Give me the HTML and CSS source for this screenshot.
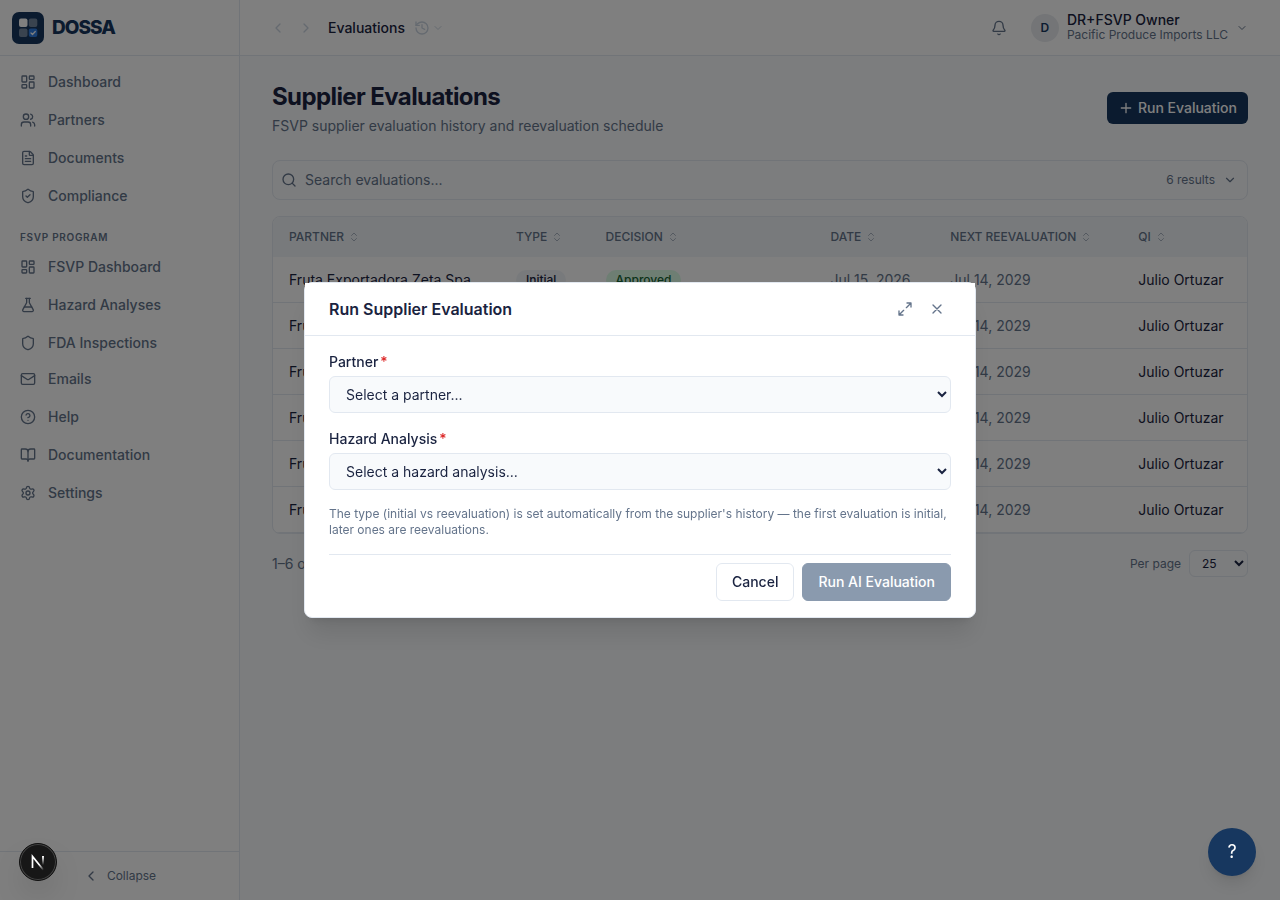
FILE: index.html
```html
<!DOCTYPE html>
<html lang="en">

<head>
    <meta charset="UTF-8">
    <meta name="viewport" content="width=device-width, initial-scale=1.0">
    <title>Supplier Evaluations - DOSSA</title>
    <link rel="stylesheet" href="styles.css">
</head>

<body>

    <!-- shared icons -->
    <svg class="sprite" aria-hidden="true">
        <symbol id="i-dashboard" viewBox="0 0 24 24"><rect x="3" y="3" width="7" height="9" rx="1"/><rect x="14" y="3" width="7" height="5" rx="1"/><rect x="14" y="12" width="7" height="9" rx="1"/><rect x="3" y="16" width="7" height="5" rx="1"/></symbol>
        <symbol id="i-sort" viewBox="0 0 24 24"><path d="m7 15 5 5 5-5"/><path d="m7 9 5-5 5 5"/></symbol>
        <symbol id="i-down" viewBox="0 0 24 24"><path d="m6 9 6 6 6-6"/></symbol>
        <symbol id="i-left" viewBox="0 0 24 24"><path d="m15 18-6-6 6-6"/></symbol>
        <symbol id="i-right" viewBox="0 0 24 24"><path d="m9 18 6-6-6-6"/></symbol>
    </svg>

    <div class="app">
        <aside class="sidebar">
            <a class="brand" href="#">
                <svg class="logo" viewBox="0 0 32 32" aria-hidden="true">
                    <rect width="32" height="32" rx="7" fill="#17375f"/>
                    <rect x="7" y="6.500" width="8.500" height="8.500" rx="2" fill="#fff"/>
                    <rect x="16.800" y="6.500" width="8.500" height="8.500" rx="2" fill="#fff" opacity=".4"/>
                    <rect x="7" y="16.500" width="8.500" height="8.500" rx="2" fill="#fff" opacity=".4"/>
                    <rect x="16.800" y="16.500" width="8.500" height="8.500" rx="2" fill="#2f7de1"/>
                    <path d="m19 21 1.500 1.500 2.800-3" fill="none" stroke="#fff" stroke-width="1.200" stroke-linecap="round" stroke-linejoin="round"/>
                </svg>
                <span>DOSSA</span>
            </a>
            <nav class="nav">
                <a href="#"><svg class="icon"><use href="#i-dashboard"/></svg>Dashboard</a>
                <a href="#"><svg class="icon" viewBox="0 0 24 24"><path d="M16 21v-2a4 4 0 0 0-4-4H6a4 4 0 0 0-4 4v2"/><circle cx="9" cy="7" r="4"/><path d="M22 21v-2a4 4 0 0 0-3-3.870"/><path d="M16 3.130a4 4 0 0 1 0 7.750"/></svg>Partners</a>
                <a href="#"><svg class="icon" viewBox="0 0 24 24"><path d="M6 22a2 2 0 0 1-2-2V4a2 2 0 0 1 2-2h8a2.400 2.400 0 0 1 1.704.706l3.588 3.588A2.400 2.400 0 0 1 20 8v12a2 2 0 0 1-2 2z"/><path d="M14 2v5a1 1 0 0 0 1 1h5M10 9H8M16 13H8M16 17H8"/></svg>Documents</a>
                <a href="#"><svg class="icon" viewBox="0 0 24 24"><path d="M20 13c0 5-3.500 7.500-7.660 8.950a1 1 0 0 1-.670-.010C7.500 20.500 4 18 4 13V6a1 1 0 0 1 1-1c2 0 4.500-1.200 6.240-2.720a1.170 1.170 0 0 1 1.520 0C14.510 3.810 17 5 19 5a1 1 0 0 1 1 1z"/><path d="m9 12 2 2 4-4"/></svg>Compliance</a>
            </nav>
            <h2 class="nav-heading">FSVP Program</h2>
            <nav class="nav">
                <a href="#"><svg class="icon"><use href="#i-dashboard"/></svg>FSVP Dashboard</a>
                <a href="#"><svg class="icon" viewBox="0 0 24 24"><path d="M14 2v6a2 2 0 0 0 .245.960l5.510 10.080A2 2 0 0 1 18 22H6a2 2 0 0 1-1.755-2.960l5.510-10.080A2 2 0 0 0 10 8V2"/><path d="M6.453 15h11.094M8.500 2h7"/></svg>Hazard Analyses</a>
                <a href="#"><svg class="icon" viewBox="0 0 24 24"><path d="M20 13c0 5-3.500 7.500-7.660 8.950a1 1 0 0 1-.670-.010C7.500 20.500 4 18 4 13V6a1 1 0 0 1 1-1c2 0 4.500-1.200 6.240-2.720a1.170 1.170 0 0 1 1.520 0C14.510 3.810 17 5 19 5a1 1 0 0 1 1 1z"/></svg>FDA Inspections</a>
            </nav>
            <nav class="nav">
                <a href="#"><svg class="icon" viewBox="0 0 24 24"><rect x="2" y="4" width="20" height="16" rx="2"/><path d="m22 7-8.991 5.727a2 2 0 0 1-2.009 0L2 7"/></svg>Emails</a>
                <a href="#"><svg class="icon" viewBox="0 0 24 24"><circle cx="12" cy="12" r="10"/><path d="M9.090 9a3 3 0 0 1 5.830 1c0 2-3 3-3 3M12 17h.010"/></svg>Help</a>
                <a href="#"><svg class="icon" viewBox="0 0 24 24"><path d="M12 7v14"/><path d="M3 18a1 1 0 0 1-1-1V4a1 1 0 0 1 1-1h5a4 4 0 0 1 4 4 4 4 0 0 1 4-4h5a1 1 0 0 1 1 1v13a1 1 0 0 1-1 1h-6a3 3 0 0 0-3 3 3 3 0 0 0-3-3z"/></svg>Documentation</a>
                <a href="#"><svg class="icon" viewBox="0 0 24 24"><path d="M9.671 4.136a2.340 2.340 0 0 1 4.659 0 2.340 2.340 0 0 0 3.319 1.915 2.340 2.340 0 0 1 2.330 4.033 2.340 2.340 0 0 0 0 3.831 2.340 2.340 0 0 1-2.330 4.033 2.340 2.340 0 0 0-3.319 1.915 2.340 2.340 0 0 1-4.659 0 2.340 2.340 0 0 0-3.320-1.915 2.340 2.340 0 0 1-2.330-4.033 2.340 2.340 0 0 0 0-3.831A2.340 2.340 0 0 1 6.350 6.051a2.340 2.340 0 0 0 3.319-1.915"/><circle cx="12" cy="12" r="3"/></svg>Settings</a>
            </nav>
            <div class="sidebar-footer">
                <button type="button"><svg class="icon"><use href="#i-left"/></svg>Collapse</button>
            </div>
        </aside>

        <div class="page">
            <header class="topbar">
                <div class="history">
                    <button type="button" aria-label="Back"><svg class="icon"><use href="#i-left"/></svg></button>
                    <button type="button" aria-label="Forward"><svg class="icon"><use href="#i-right"/></svg></button>
                </div>
                <span class="crumb">Evaluations</span>
                <button class="recent" type="button" aria-label="Recent pages">
                    <svg class="icon" viewBox="0 0 24 24"><path d="M3 12a9 9 0 1 0 9-9 9.750 9.750 0 0 0-6.740 2.740L3 8"/><path d="M3 3v5h5M12 7v5l4 2"/></svg>
                    <svg class="icon tiny"><use href="#i-down"/></svg>
                </button>
                <button class="bell" type="button" aria-label="Notifications">
                    <svg class="icon" viewBox="0 0 24 24"><path d="M10.268 21a2 2 0 0 0 3.464 0"/><path d="M3.262 15.326A1 1 0 0 0 4 17h16a1 1 0 0 0 .740-1.673C19.410 13.956 18 12.499 18 8A6 6 0 0 0 6 8c0 4.499-1.411 5.956-2.738 7.326"/></svg>
                </button>
                <button class="user" type="button">
                    <span class="avatar">D</span>
                    <span class="user-text">
                        <span class="user-name">DR+FSVP Owner</span>
                        <span class="user-org">Pacific Produce Imports LLC</span>
                    </span>
                    <svg class="icon tiny"><use href="#i-down"/></svg>
                </button>
            </header>

            <main class="content">
                <div class="page-head">
                    <div>
                        <h1>Supplier Evaluations</h1>
                        <p>FSVP supplier evaluation history and reevaluation schedule</p>
                    </div>
                    <button class="btn-run" type="button">
                        <svg class="icon" viewBox="0 0 24 24"><path d="M5 12h14M12 5v14"/></svg>
                        Run Evaluation
                    </button>
                </div>

                <div class="search">
                    <svg class="icon" viewBox="0 0 24 24"><circle cx="11" cy="11" r="8"/><path d="m21 21-4.300-4.300"/></svg>
                    <input type="text" placeholder="Search evaluations..." aria-label="Search evaluations">
                    <span class="results">6 results</span>
                    <button type="button" aria-label="Show filters"><svg class="icon small"><use href="#i-down"/></svg></button>
                </div>

                <div class="table-wrap">
                    <table>
                        <colgroup>
                            <col class="col-partner">
                            <col class="col-type">
                            <col class="col-decision">
                            <col class="col-date">
                            <col class="col-next">
                            <col>
                        </colgroup>
                        <thead>
                            <tr>
                                <th><span>Partner<svg class="icon tiny"><use href="#i-sort"/></svg></span></th>
                                <th><span>Type<svg class="icon tiny"><use href="#i-sort"/></svg></span></th>
                                <th><span>Decision<svg class="icon tiny"><use href="#i-sort"/></svg></span></th>
                                <th><span>Date<svg class="icon tiny"><use href="#i-sort"/></svg></span></th>
                                <th><span>Next Reevaluation<svg class="icon tiny"><use href="#i-sort"/></svg></span></th>
                                <th><span>QI<svg class="icon tiny"><use href="#i-sort"/></svg></span></th>
                            </tr>
                        </thead>
                        <tbody>
                            <tr>
                                <td>Fruta Exportadora Zeta Spa</td>
                                <td><span class="badge">Initial</span></td>
                                <td><span class="badge approved">Approved</span></td>
                                <td class="date">Jul 15, 2026</td>
                                <td class="date">Jul 14, 2029</td>
                                <td>Julio Ortuzar</td>
                            </tr>
                            <tr>
                                <td>Fruta Exportadora Zeta Spa</td>
                                <td><span class="badge">Initial</span></td>
                                <td><span class="badge approved">Approved</span></td>
                                <td class="date">Jul 15, 2026</td>
                                <td class="date">Jul 14, 2029</td>
                                <td>Julio Ortuzar</td>
                            </tr>
                            <tr>
                                <td>Fruta Exportadora Zeta Spa</td>
                                <td><span class="badge">Initial</span></td>
                                <td><span class="badge approved">Approved</span></td>
                                <td class="date">Jul 15, 2026</td>
                                <td class="date">Jul 14, 2029</td>
                                <td>Julio Ortuzar</td>
                            </tr>
                            <tr>
                                <td>Fruta Exportadora Zeta Spa</td>
                                <td><span class="badge">Initial</span></td>
                                <td><span class="badge approved">Approved</span></td>
                                <td class="date">Jul 15, 2026</td>
                                <td class="date">Jul 14, 2029</td>
                                <td>Julio Ortuzar</td>
                            </tr>
                            <tr>
                                <td>Fruta Exportadora Zeta Spa</td>
                                <td><span class="badge">Initial</span></td>
                                <td><span class="badge approved">Approved</span></td>
                                <td class="date">Jul 15, 2026</td>
                                <td class="date">Jul 14, 2029</td>
                                <td>Julio Ortuzar</td>
                            </tr>
                            <tr>
                                <td>Fruta Exportadora Zeta Spa</td>
                                <td><span class="badge">Initial</span></td>
                                <td><span class="badge approved">Approved</span></td>
                                <td class="date">Jul 15, 2026</td>
                                <td class="date">Jul 14, 2029</td>
                                <td>Julio Ortuzar</td>
                            </tr>
                        </tbody>
                    </table>
                </div>

                <div class="pager">
                    <span class="range">1–6 of 6</span>
                    <label for="perPage">Per page</label>
                    <select id="perPage">
                        <option>10</option>
                        <option selected>25</option>
                        <option>50</option>
                        <option>100</option>
                    </select>
                </div>
            </main>
        </div>
    </div>

    <div class="overlay">
        <div class="modal" role="dialog" aria-modal="true" aria-labelledby="modalTitle">
            <div class="modal-head">
                <h2 id="modalTitle">Run Supplier Evaluation</h2>
                <button type="button" aria-label="Expand"><svg class="icon" viewBox="0 0 24 24"><path d="M15 3h6v6M21 3l-7 7M3 21l7-7M9 21H3v-6"/></svg></button>
                <button type="button" aria-label="Close"><svg class="icon" viewBox="0 0 24 24"><path d="M18 6 6 18M6 6l12 12"/></svg></button>
            </div>
            <form class="modal-body">
                <div class="field">
                    <label for="partner">Partner<span class="required">*</span></label>
                    <select id="partner">
                        <option>Select a partner...</option>
                    </select>
                </div>
                <div class="field">
                    <label for="hazard">Hazard Analysis<span class="required">*</span></label>
                    <select id="hazard">
                        <option>Select a hazard analysis...</option>
                    </select>
                </div>
                <p class="hint">The type (initial vs reevaluation) is set automatically from the supplier's history — the first evaluation is initial, later ones are reevaluations.</p>
                <div class="modal-actions">
                    <button class="btn-cancel" type="button">Cancel</button>
                    <button class="btn-submit" type="submit" disabled>Run AI Evaluation</button>
                </div>
            </form>
        </div>
    </div>

    <button class="dev-badge" type="button" aria-label="Open dev tools">
        <svg viewBox="0 0 38 38" aria-hidden="true">
            <defs>
                <linearGradient id="fadeA" x1="0" y1="0" x2="1" y2="1"><stop offset=".6" stop-color="#fff"/><stop offset="1" stop-color="#fff" stop-opacity="0"/></linearGradient>
                <linearGradient id="fadeB" x1="0" y1="0" x2="0" y2="1"><stop offset="0" stop-color="#fff"/><stop offset="1" stop-color="#fff" stop-opacity="0"/></linearGradient>
            </defs>
            <path d="M13.500 25V13.500L24.500 27" fill="none" stroke="url(#fadeA)" stroke-width="1.700"/>
            <rect x="23" y="13" width="2" height="9" fill="url(#fadeB)"/>
        </svg>
    </button>
    <button class="help-btn" type="button" aria-label="Help">?</button>

</body>

</html>
```
FILE: styles.css
```css
* {
    box-sizing: border-box;
}

body {
    margin: 0;
    font-family: Inter, "Liberation Sans", sans-serif;
    font-size: 14px;
    line-height: 20px;
    color: #1a2340;
    background-color: #f8fafc;
}

h1,
h2,
p {
    margin: 0;
}

a {
    color: inherit;
    text-decoration: none;
}

button,
input,
select {
    font: inherit;
    color: inherit;
}

button {
    display: flex;
    align-items: center;
    justify-content: center;
    padding: 0;
    border: none;
    background: none;
    cursor: pointer;
}

.sprite {
    display: none;
}

.icon {
    flex: none;
    width: 16px;
    height: 16px;
    fill: none;
    stroke: currentColor;
    stroke-width: 2;
    stroke-linecap: round;
    stroke-linejoin: round;
}

.icon.small {
    width: 14px;
    height: 14px;
}

.icon.tiny {
    width: 12px;
    height: 12px;
}

.app {
    display: flex;
    min-height: 100vh;
}

/* sidebar */
.sidebar {
    display: flex;
    flex-direction: column;
    flex: none;
    width: 240px;
    background-color: #fff;
    border-right: 1px solid #e2e8f0;
    color: #64748b;
}

.brand {
    display: flex;
    align-items: center;
    gap: 8px;
    height: 56px;
    padding: 0 12px;
    border-bottom: 1px solid #e2e8f0;
    color: #17375f;
    font-size: 19px;
    font-weight: 800;
    letter-spacing: -0.05em;
}

.logo {
    width: 32px;
    height: 32px;
}

.nav {
    display: flex;
    flex-direction: column;
    gap: 2px;
    padding: 0 8px;
}

.brand + .nav {
    padding-top: 8px;
}

.nav a {
    display: flex;
    align-items: center;
    gap: 12px;
    height: 36px;
    padding: 0 12px;
    font-weight: 500;
}

.nav-heading {
    padding: 16px 20px 4px;
    font-size: 10px;
    line-height: 15px;
    font-weight: 600;
    letter-spacing: 0.07em;
    text-transform: uppercase;
}

.sidebar-footer {
    margin-top: auto;
    padding: 8px;
    border-top: 1px solid #e2e8f0;
}

.sidebar-footer button {
    gap: 8px;
    width: 100%;
    height: 32px;
    font-size: 12px;
}

/* top bar */
.page {
    flex: 1;
    min-width: 0;
}

.topbar {
    display: flex;
    align-items: center;
    height: 56px;
    padding: 0 32px 0 24px;
    background-color: #fff;
    border-bottom: 1px solid #e2e8f0;
}

.history {
    display: flex;
    margin-right: 8px;
    color: #cbd5e1;
}

.history button {
    width: 28px;
    height: 28px;
}

.crumb {
    font-weight: 500;
}

.recent {
    gap: 2px;
    margin-left: 9px;
    color: #cbd5e1;
}

.bell {
    margin-left: auto;
    color: #64748b;
}

.user {
    gap: 8px;
    margin-left: 24px;
    color: #64748b;
    text-align: left;
}

.avatar {
    width: 28px;
    height: 28px;
    border-radius: 50%;
    background-color: #e8ebef;
    color: #17375f;
    font-size: 12px;
    line-height: 28px;
    font-weight: 600;
    text-align: center;
}

.user-text {
    display: flex;
    flex-direction: column;
}

.user-name {
    color: #1a2340;
    line-height: 14px;
    font-weight: 500;
}

.user-org {
    font-size: 12px;
    line-height: 15px;
}

/* page content */
.content {
    display: flex;
    flex-direction: column;
    gap: 16px;
    padding: 24px 32px;
}

.page-head {
    display: flex;
    align-items: center;
    justify-content: space-between;
    margin-bottom: 8px;
}

.page-head h1 {
    font-size: 24px;
    line-height: 34px;
    font-weight: 700;
    letter-spacing: -0.025em;
}

.page-head p {
    margin-top: 2px;
    color: #64748b;
}

.btn-run {
    gap: 4px;
    height: 32px;
    padding: 0 11px;
    border-radius: 6px;
    background-color: #17375f;
    color: #fff;
    font-weight: 500;
}

.search {
    display: flex;
    align-items: center;
    gap: 8px;
    height: 40px;
    padding: 0 10px 0 8px;
    border: 1px solid #e2e8f0;
    border-radius: 8px;
    color: #64748b;
}

.search input {
    flex: 1;
    min-width: 0;
    padding: 0;
    border: none;
    outline: none;
    background: none;
}

.search input::placeholder {
    color: #64748b;
}

.results {
    font-size: 12px;
}

.table-wrap {
    overflow: hidden;
    border: 1px solid #e2e8f0;
    border-radius: 8px;
    background-color: #fff;
}

table {
    width: 100%;
    table-layout: fixed;
    border-collapse: separate;
    border-spacing: 0;
}

.col-partner {
    width: 23.3%;
}

.col-type {
    width: 9.2%;
}

.col-decision {
    width: 23.1%;
}

.col-date {
    width: 12.3%;
}

.col-next {
    width: 19.3%;
}

th {
    height: 40px;
    padding: 0 16px;
    background-color: #f1f5f9;
    color: #64748b;
    font-size: 12px;
    font-weight: 500;
    text-align: left;
    text-transform: uppercase;
    white-space: nowrap;
}

th span {
    display: flex;
    align-items: center;
    gap: 4px;
}

th .icon {
    opacity: 0.5;
}

td {
    height: 46px;
    padding: 0 16px;
    border-bottom: 1px solid #e2e8f0;
    white-space: nowrap;
}

.date {
    color: #64748b;
}

.badge {
    display: inline-block;
    padding: 0 10px;
    border-radius: 10px;
    background-color: #f1f5f9;
    font-size: 12px;
    font-weight: 500;
}

.badge.approved {
    background-color: #dcfce7;
    color: #166534;
}

.pager {
    display: flex;
    align-items: center;
    gap: 8px;
    color: #64748b;
}

.range {
    margin-right: auto;
}

.pager label {
    font-size: 12px;
}

.pager select {
    height: 27px;
    padding: 0 8px;
    border: 1px solid #e2e8f0;
    border-radius: 6px;
    background-color: #f8fafc;
    color: #1a2340;
    font-size: 12px;
}

/* modal */
.overlay {
    position: fixed;
    inset: 0;
    display: flex;
    align-items: center;
    justify-content: center;
    padding: 16px;
    background-color: rgba(0, 0, 0, 0.5);
}

.modal {
    width: 100%;
    max-width: 672px;
    border: 1px solid #e2e8f0;
    border-radius: 8px;
    background-color: #fff;
    box-shadow: 0 20px 25px -5px rgba(0, 0, 0, 0.1), 0 8px 10px -6px rgba(0, 0, 0, 0.1);
}

.modal-head {
    display: flex;
    align-items: center;
    gap: 4px;
    padding: 12px 24px;
    border-bottom: 1px solid #e2e8f0;
    background-color: #fff;
}

.modal-head h2 {
    margin-right: auto;
    font-size: 16px;
    line-height: 24px;
    font-weight: 600;
}

.modal-head button {
    width: 28px;
    height: 28px;
    color: #64748b;
}

.modal-body {
    display: flex;
    flex-direction: column;
    gap: 16px;
    padding: 16px 24px;
}

.field {
    display: flex;
    flex-direction: column;
    gap: 4px;
}

.field label {
    font-weight: 500;
}

.required {
    margin-left: 2px;
    color: #dc2626;
}

.field select {
    width: 100%;
    height: 37px;
    padding: 0 12px;
    border: 1px solid #e2e8f0;
    border-radius: 6px;
    background-color: #f8fafc;
}

.hint {
    color: #64748b;
    font-size: 12px;
    line-height: 16px;
}

.modal-actions {
    display: flex;
    justify-content: flex-end;
    gap: 8px;
    padding-top: 8px;
    border-top: 1px solid #e2e8f0;
}

.modal-actions button {
    height: 38px;
    padding: 0 15px;
    border: 1px solid #e2e8f0;
    border-radius: 6px;
    font-weight: 500;
}

.modal-actions .btn-submit {
    border-color: #17375f;
    background-color: #17375f;
    color: #fff;
    opacity: 0.5;
}

/* floating buttons */
.dev-badge {
    position: fixed;
    left: 19px;
    bottom: 19px;
    width: 38px;
    height: 38px;
    border: 1px solid #111;
    border-radius: 50%;
    background-color: #171717;
    box-shadow: inset 0 0 0 1px #444, 0 16px 32px -8px rgba(0, 0, 0, 0.25);
}

.dev-badge svg {
    flex: none;
    width: 38px;
    height: 38px;
}

.help-btn {
    position: fixed;
    right: 24px;
    bottom: 24px;
    width: 48px;
    height: 48px;
    border-radius: 50%;
    background-color: #17375f;
    color: #fff;
    font-size: 18px;
    box-shadow: 0 10px 15px -3px rgba(0, 0, 0, 0.1), 0 4px 6px -4px rgba(0, 0, 0, 0.1);
}
```
